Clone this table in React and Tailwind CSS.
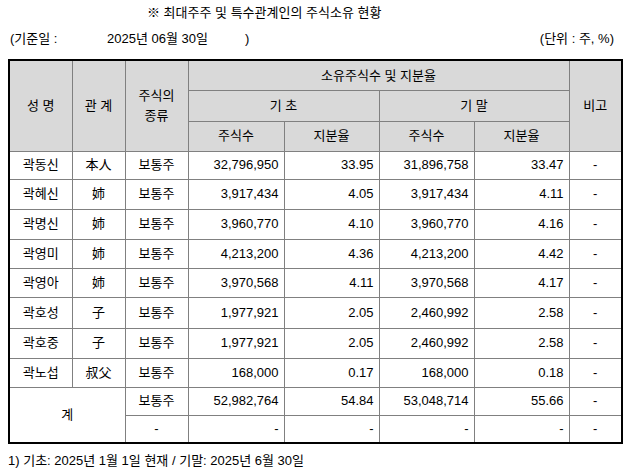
const ROWS = [
  { name: '곽동신', rel: '本人', begin: '32,796,950', beginPct: '33.95', end: '31,896,758', endPct: '33.47', h: 'h-[28px]' },
  { name: '곽혜신', rel: '姉', begin: '3,917,434', beginPct: '4.05', end: '3,917,434', endPct: '4.11', h: 'h-[30px]' },
  { name: '곽명신', rel: '姉', begin: '3,960,770', beginPct: '4.10', end: '3,960,770', endPct: '4.16', h: 'h-[30px]' },
  { name: '곽영미', rel: '姉', begin: '4,213,200', beginPct: '4.36', end: '4,213,200', endPct: '4.42', h: 'h-[29px]' },
  { name: '곽영아', rel: '姉', begin: '3,970,568', beginPct: '4.11', end: '3,970,568', endPct: '4.17', h: 'h-[29px]' },
  { name: '곽호성', rel: '子', begin: '1,977,921', beginPct: '2.05', end: '2,460,992', endPct: '2.58', h: 'h-[31px]' },
  { name: '곽호중', rel: '子', begin: '1,977,921', beginPct: '2.05', end: '2,460,992', endPct: '2.58', h: 'h-[30px]' },
  { name: '곽노섭', rel: '叔父', begin: '168,000', beginPct: '0.17', end: '168,000', endPct: '0.18', h: 'h-[29px]' },
]

const cell = 'border border-[#808080] px-[5px] align-middle'
const head = `${cell} bg-[#d9d9d9] text-center font-normal`

export default function App() {
  return (
    <div
      className="w-[627px] h-[475px] bg-white text-black text-[13px] overflow-hidden"
      style={{ fontFamily: '"Liberation Sans", "Noto Sans CJK KR", sans-serif' }}
    >
      {/* title */}
      <div className="h-[26px] leading-[26px] pl-[147px] whitespace-pre">※ 최대주주 및 특수관계인의 주식소유 현황</div>

      <div className="h-[25px] leading-[25px] flex pl-[10px] pr-[13px]">
        <span className="w-[97px]">(기준일 :</span>
        <span className="w-[138px]">2025년 06월 30일</span>
        <span>)</span>
        <span className="ml-auto whitespace-pre">(단위 : 주, %)</span>
      </div>

      <table className="mt-[8px] ml-[8px] w-[613px] table-fixed border-collapse border-2 border-black">
        <colgroup>
          <col className="w-[63px]" />
          <col className="w-[53px]" />
          <col className="w-[63px]" />
          <col className="w-[96px]" />
          <col className="w-[95px]" />
          <col className="w-[95px]" />
          <col className="w-[95px]" />
          <col className="w-[53px]" />
        </colgroup>
        <thead>
          <tr className="h-[30px]">
            <th rowSpan={3} className={head}>성 명</th>
            <th rowSpan={3} className={head}>관 계</th>
            <th rowSpan={3} className={`${head} leading-[20px]`}>주식의<br />종류</th>
            <th colSpan={4} className={head}>소유주식수 및 지분율</th>
            <th rowSpan={3} className={head}>비고</th>
          </tr>
          <tr className="h-[31px]">
            <th colSpan={2} className={head}>기 초</th>
            <th colSpan={2} className={head}>기 말</th>
          </tr>
          <tr className="h-[30px]">
            <th className={head}>주식수</th>
            <th className={head}>지분율</th>
            <th className={head}>주식수</th>
            <th className={head}>지분율</th>
          </tr>
        </thead>
        <tbody>
          {ROWS.map(r => (
            <tr key={r.name} className={r.h}>
              <td className={`${cell} text-center`}>{r.name}</td>
              <td className={`${cell} text-center`}>{r.rel}</td>
              <td className={`${cell} text-center`}>보통주</td>
              <td className={`${cell} text-right`}>{r.begin}</td>
              <td className={`${cell} text-right`}>{r.beginPct}</td>
              <td className={`${cell} text-right`}>{r.end}</td>
              <td className={`${cell} text-right`}>{r.endPct}</td>
              <td className={`${cell} text-center`}>-</td>
            </tr>
          ))}
          <tr className="h-[28px]">
            <td rowSpan={2} colSpan={2} className={`${cell} text-center`}>계</td>
            <td className={`${cell} text-center`}>보통주</td>
            <td className={`${cell} text-right`}>52,982,764</td>
            <td className={`${cell} text-right`}>54.84</td>
            <td className={`${cell} text-right`}>53,048,714</td>
            <td className={`${cell} text-right`}>55.66</td>
            <td className={`${cell} text-center`}>-</td>
          </tr>
          <tr className="h-[28px]">
            <td className={`${cell} text-center`}>-</td>
            <td className={`${cell} text-right`}>-</td>
            <td className={`${cell} text-right`}>-</td>
            <td className={`${cell} text-right`}>-</td>
            <td className={`${cell} text-right`}>-</td>
            <td className={`${cell} text-center`}>-</td>
          </tr>
        </tbody>
      </table>

      <div className="h-[34px] leading-[34px] pl-[8px]">1) 기초: 2025년 1월 1일 현재 / 기말: 2025년 6월 30일</div>
    </div>
  )
}
